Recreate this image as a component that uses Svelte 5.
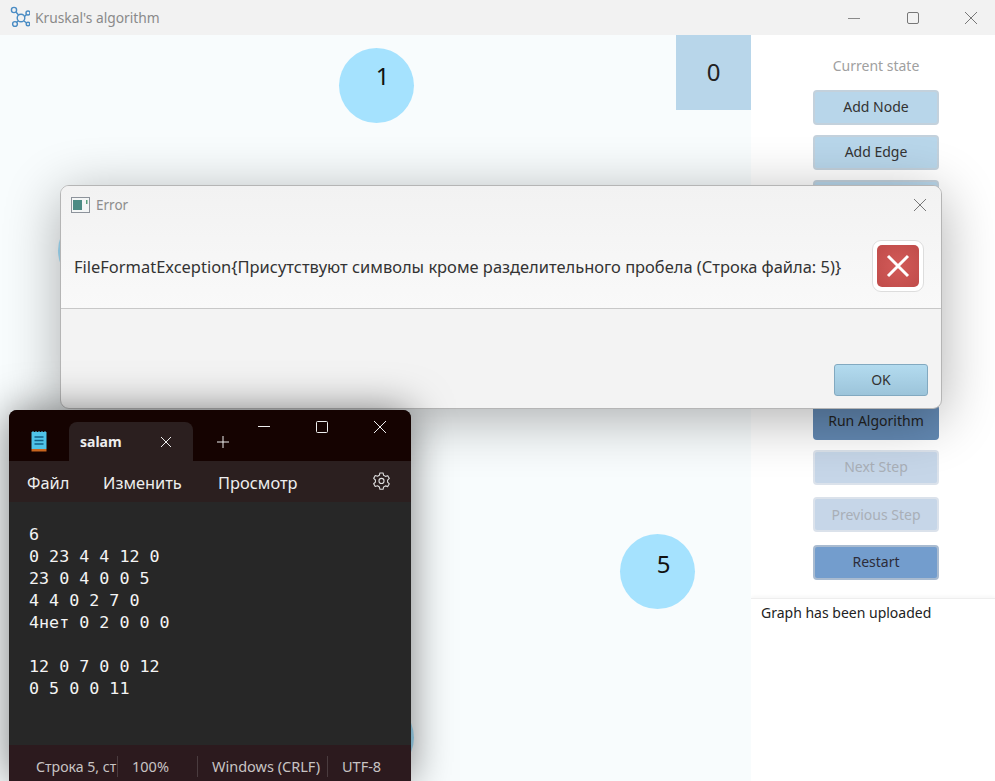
<script>
  const nodes = [
    { x: 376, y: 85, label: '1', lift: 20 },
    { x: 657, y: 571, label: '5', lift: 15 },
    { x: 95, y: 250, label: '', lift: 0 },
    { x: 376, y: 737, label: '', lift: 0 }
  ];
  const lines = ['6', '0 23 4 4 12 0', '23 0 4 0 0 5', '4 4 0 2 7 0', '4нет 0 2 0 0 0', '', '12 0 7 0 0 12', '0 5 0 0 11'];
</script>

<div class="app">
  <header class="titlebar">
    <svg class="logo" width="26" height="26" viewBox="0 0 26 26" fill="none" stroke="#4a8cc4" stroke-width="1.400">
      <circle cx="10" cy="7" r="2.600" /><circle cx="17" cy="15" r="3.800" />
      <circle cx="24" cy="10" r="2" /><circle cx="24" cy="21" r="1.800" /><circle cx="11" cy="21" r="2.400" />
      <path d="M12 9l2.500 3M20.500 13.500l2-2M20 18l2.600 2M14.500 18l-2.500 1.500" />
    </svg>
    <span class="title">Kruskal's algorithm</span>
    <div class="controls">
      <svg width="14" height="14" viewBox="0 0 14 14" stroke="#8a8a8a" fill="none"><path d="M1 7.500h12" /></svg>
      <svg width="14" height="14" viewBox="0 0 14 14" stroke="#777" fill="none"><rect x="1.500" y="1.500" width="11" height="11" rx="1.500" /></svg>
      <svg width="14" height="14" viewBox="0 0 14 14" stroke="#777" fill="none"><path d="M1 1l12 12M13 1L1 13" /></svg>
    </div>
  </header>

  <div class="main">
    <section class="canvas">
      {#each nodes as n}
        <div class="node" style="left:{n.x - 37.5}px;top:{n.y - 72.5}px;padding-bottom:{n.lift}px">{n.label}</div>
      {/each}
      <div class="current">0</div>
    </section>

    <aside class="side">
      <div class="tools">
        <p class="state">Current state</p>
        <button class="btn">Add Node</button>
        <button class="btn">Add Edge</button>
        <button class="btn"></button>
        <button class="btn"></button>
        <button class="btn"></button>
        <button class="btn"></button>
        <button class="btn"></button>
        <button class="btn run">Run Algorithm</button>
        <button class="btn off next">Next Step</button>
        <button class="btn off prev">Previous Step</button>
        <button class="btn restart">Restart</button>
      </div>
      <div class="log">Graph has been uploaded</div>
    </aside>
  </div>

  <div class="dialog">
    <div class="dlg-top">
      <div class="dlg-title">
        <svg width="19" height="16" viewBox="0 0 19 16">
          <rect x="0.500" y="0.500" width="18" height="15" fill="#f4f6f6" stroke="#8d939b" />
          <rect x="2" y="3" width="9" height="10" fill="#4b8b84" />
          <rect x="15" y="3" width="1.500" height="4" fill="#5aa07e" />
        </svg>
        <span>Error</span>
        <svg class="dlg-x" width="14" height="14" viewBox="0 0 14 14" stroke="#777" fill="none"><path d="M1 1l12 12M13 1L1 13" /></svg>
      </div>
      <div class="dlg-msg">
        <span>FileFormatException&#123;Присутствуют символы кроме разделительного пробела (Строка файла: 5)&#125;</span>
        <div class="err-icon">
          <div class="err-red">
            <svg width="26" height="26" viewBox="0 0 26 26" stroke="#fff" stroke-width="3" fill="none"><path d="M3 3l20 20M23 3L3 23" /></svg>
          </div>
        </div>
      </div>
    </div>
    <div class="dlg-bottom"><button class="ok">OK</button></div>
  </div>

  <div class="notepad">
    <div class="np-tabs">
      <svg class="np-icon" width="16" height="21" viewBox="0 0 16 21">
        <rect x="0.500" y="1" width="15" height="17" fill="#4fc3e8" />
        <rect x="0.500" y="18" width="15" height="2.500" fill="#c8651e" />
        <path d="M3.500 6h9M3.500 9.500h9M3.500 13h9" stroke="#135f84" stroke-width="1.500" />
        <path d="M2 1V0M5 1V0M8 1V0M11 1V0M14 1V0" stroke="#4fc3e8" />
      </svg>
      <div class="tab">
        <span>salam</span>
        <svg width="12" height="12" viewBox="0 0 12 12" stroke="#eee" fill="none"><path d="M1 1l10 10M11 1L1 11" /></svg>
      </div>
      <svg class="plus" width="14" height="14" viewBox="0 0 14 14" stroke="#eee" fill="none"><path d="M7 1v12M1 7h12" /></svg>
      <div class="np-ctl">
        <svg width="14" height="14" viewBox="0 0 14 14" stroke="#eee" fill="none"><path d="M1 6.500h12" /></svg>
        <svg width="14" height="14" viewBox="0 0 14 14" stroke="#eee" fill="none"><rect x="1.500" y="1.500" width="11" height="11" rx="1" /></svg>
        <svg width="14" height="14" viewBox="0 0 14 14" stroke="#eee" fill="none"><path d="M1 1l12 12M13 1L1 13" /></svg>
      </div>
    </div>
    <nav class="np-menu">
      <span class="m1">Файл</span>
      <span class="m2">Изменить</span>
      <span class="m3">Просмотр</span>
      <svg class="gear" width="19" height="19" viewBox="0 0 24 24" fill="none" stroke="#ddd" stroke-width="1.400" stroke-linejoin="round">
        <path d="M10 2.500h4l.7 3 2.300 1.300 2.900-.9 2 3.500-2.200 2.100v2.600l2.200 2.100-2 3.500-2.900-.9-2.300 1.300-.7 3h-4l-.7-3L7 18.700l-2.900.9-2-3.500 2.200-2.100v-2.600L2.100 9.300l2-3.500 2.900.9 2.300-1.300z" />
        <circle cx="12" cy="12.500" r="3.200" />
      </svg>
    </nav>
    <pre class="np-text">{lines.join('\n')}</pre>
    <footer class="np-status">
      <div class="c1">Строка 5, ст</div>
      <div class="c2">100%</div>
      <div class="c3">Windows (CRLF)</div>
      <div class="c4">UTF-8</div>
    </footer>
  </div>
</div>

<style>
  :global(body) { margin: 0; background: #fff; }
  .app { position: relative; width: 995px; height: 781px; overflow: hidden; font-family: "Noto Sans", "Open Sans", sans-serif; display: flex; flex-direction: column; }

  .titlebar { height: 35px; flex: none; background: #f2f2f2; display: flex; align-items: center; color: #8a8a8a; font-size: 13.800px; }
  .logo { margin: -4px 0 0 4px; }
  .title { margin-left: 5px; }
  .controls { margin-left: auto; display: flex; gap: 44.500px; padding-right: 17px; }

  .main { flex: 1; display: flex; min-height: 0; }
  .canvas { position: relative; width: 751px; background: #f8fcfd; overflow: hidden; }
  .node { position: absolute; width: 75px; height: 75px; box-sizing: border-box; padding-left: 13px; border-radius: 50%; background: #a5e2fe; display: flex; align-items: center; justify-content: center; font-size: 24px; color: #111; }
  .current { position: absolute; right: 0; top: 0; width: 75px; height: 75px; box-sizing: border-box; padding-bottom: 2px; background: #b8d6ea; display: flex; align-items: center; justify-content: center; font-size: 24px; color: #222; }

  .side { flex: 1; display: flex; flex-direction: column; background: #fff; }
  .tools { height: 563px; flex: none; display: flex; flex-direction: column; align-items: center; box-sizing: border-box; padding-left: 6px; }
  .state { margin: 20px 0 13px; height: 22px; line-height: 22px; font-size: 14px; color: #a0a0a0; }
  .btn { width: 126px; height: 35px; flex: none; margin-bottom: 10px; padding: 0 0 2px; box-sizing: border-box; border: 2px solid #c3d1dc; border-radius: 4px; background: #b8d6ea; color: #333; font: inherit; font-size: 14px; }
  .run { background: #6389b3; border-color: #6389b3; color: #222; padding-bottom: 4px; }
  .off { color: #a9afb7; background: #c6d6e8; border-color: #dbe2eb; }
  .next { margin-bottom: 12px; }
  .prev { margin-bottom: 13px; padding-bottom: 0; }
  .restart { background: #739dcd; border-color: #a9bbd0; color: #2c2c3a; }
  .log { flex: 1; border-top: 1px solid #eee; padding: 4px 10px; font-size: 14px; color: #222; box-shadow: 0 -2px 3px rgba(0, 0, 0, 0.03); }

  .dialog { position: absolute; left: 60px; top: 185px; width: 882px; height: 224px; box-sizing: border-box; border: 1px solid #b5b5b5; border-radius: 9px; background: #f3f3f3; box-shadow: 0 10px 55px rgba(0, 0, 0, 0.32); display: flex; flex-direction: column; overflow: hidden; }
  .dlg-top { height: 123px; flex: none; box-sizing: border-box; border-bottom: 1px solid #c8c8c8; background: linear-gradient(#f2f2f2, #f9f9f9); }
  .dlg-title { display: flex; align-items: center; gap: 6px; height: 37px; padding: 0 14px 0 10px; color: #8d8d8d; font-size: 13.500px; }
  .dlg-x { margin-left: auto; }
  .dlg-msg { display: flex; align-items: center; justify-content: space-between; padding: 17px 17px 0 13px; font-size: 16.470px; color: #333; white-space: nowrap; }
  .err-icon { width: 52px; height: 52px; box-sizing: border-box; padding: 4px; background: #fff; border: 1px solid #ddd; border-radius: 9px; }
  .err-red { height: 100%; border-radius: 5px; background: radial-gradient(#d25a58, #c04c4a); display: flex; align-items: center; justify-content: center; }
  .dlg-bottom { flex: 1; display: flex; justify-content: flex-end; align-items: flex-end; padding: 0 13px 12px 0; }
  .ok { width: 94px; height: 32px; padding: 0 0 2px; border: 1px solid #82a9c0; border-radius: 3px; background: linear-gradient(#b3dbef, #9cc4da); color: #333; font: inherit; font-size: 14px; }

  .notepad { position: absolute; left: 9px; top: 410px; width: 402px; height: 371px; border-radius: 8px 8px 0 0; background: #272727; box-shadow: 0 0 40px rgba(0, 0, 0, 0.5); display: flex; flex-direction: column; overflow: hidden; color: #eee; }
  .np-tabs { position: relative; height: 51px; flex: none; background: #150301; }
  .np-icon { position: absolute; left: 22px; top: 21px; }
  .tab { position: absolute; left: 60px; top: 12px; width: 124px; height: 39px; box-sizing: border-box; padding: 0 21px 0 11px; border-radius: 8px 8px 0 0; background: #2b1f1f; display: flex; align-items: center; justify-content: space-between; font-size: 14px; font-weight: 700; }
  .plus { position: absolute; left: 207px; top: 25px; }
  .np-ctl { position: absolute; left: 248px; top: 10px; display: flex; gap: 44px; }
  .np-menu { height: 41px; flex: none; position: relative; background: #2b1f1f; font-size: 16.400px; }
  .np-menu span { position: absolute; top: 10px; }
  .m1 { left: 18px; }
  .m2 { left: 94px; }
  .m3 { left: 209px; }
  .gear { position: absolute; left: 363px; top: 10px; }
  .np-text { flex: 1; margin: 0; padding: 21px 20px 0; font-family: "DejaVu Sans Mono", monospace; font-size: 16.700px; line-height: 22px; color: #f4f4f4; }
  .np-status { height: 36px; flex: none; padding-top: 7px; box-sizing: border-box; background: #2c1a1e; display: flex; align-items: center; font-size: 14.500px; color: #c8c4c4; }
  .np-status div { height: 21px; line-height: 21px; white-space: nowrap; overflow: hidden; box-sizing: border-box; }
  .c1 { width: 108px; padding-left: 27px; font-size: 14.100px; }
  .c2 { width: 80px; padding-left: 14px; border-left: 1px solid #4a3c3f; }
  .c3 { width: 130px; padding-left: 14px; border-left: 1px solid #4a3c3f; }
  .c4 { flex: 1; padding-left: 14px; border-left: 1px solid #4a3c3f; }
</style>
